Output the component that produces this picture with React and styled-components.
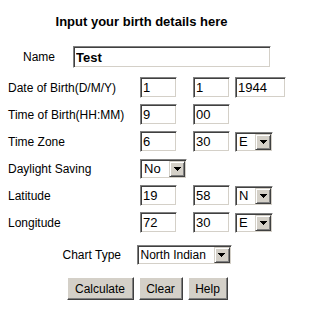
import React from "react";
import styled, { createGlobalStyle } from "styled-components";

const GlobalStyle = createGlobalStyle`
  html, body {
    margin: 0;
    padding: 0;
    background: #fff;
  }
  body {
    font-family: "Liberation Sans", Arial, sans-serif;
    color: #000;
  }
`;

const Page = styled.form`
  width: 294px;
  display: flex;
  flex-direction: column;
`;

const Title = styled.h1`
  margin: 0;
  height: 44px;
  line-height: 44px;
  padding-right: 11px;
  text-align: center;
  font-size: 13px;
  font-weight: bold;
`;

const CenterRow = styled.div`
  display: flex;
  justify-content: center;
  align-items: center;
  height: ${(p) => p.$height}px;
  margin-top: ${(p) => p.$top || 0}px;
  gap: ${(p) => p.$gap || 0}px;
`;

const Label = styled.label`
  font-size: 12px;
  width: ${(p) => (p.$width ? `${p.$width}px` : "auto")};
  flex-shrink: 0;
  white-space: nowrap;
`;

const GridLabel = styled(Label)`
  grid-column: 1;
`;

const Grid = styled.div`
  display: grid;
  grid-template-columns: 132px 53px 42px auto;
  grid-auto-rows: 27px;
  align-items: center;
  justify-items: start;
  padding-left: 8px;
  margin-top: 4px;
`;

const TextBox = styled.input`
  box-sizing: border-box;
  width: ${(p) => p.$width}px;
  height: ${(p) => p.$height || 21}px;
  margin: 0;
  padding: 0 2px;
  border: 1px solid;
  border-color: #808080 #fff #fff #808080;
  box-shadow: inset 1px 1px #404040, inset -1px -1px #d4d0c8;
  border-radius: 0;
  font-family: inherit;
  font-size: 13px;
  font-weight: ${(p) => (p.$bold ? "bold" : "normal")};
  color: #000;
  background: #fff;
  outline: none;
`;

const SelectFrame = styled.span`
  box-sizing: border-box;
  display: inline-flex;
  width: ${(p) => p.$width}px;
  height: 20px;
  padding: 1px;
  border: 1px solid;
  border-color: #808080 #fff #fff #808080;
  box-shadow: inset 1px 1px #404040, inset -1px -1px #d4d0c8;
  background: #fff;
`;

const NativeSelect = styled.select`
  appearance: none;
  flex: 1;
  min-width: 0;
  margin: 0;
  padding: 0 0 0 2px;
  border: 0;
  border-radius: 0;
  outline: none;
  background: transparent;
  font-family: inherit;
  font-size: ${(p) => p.$size || 13}px;
  color: #000;
`;

const ArrowButton = styled.span`
  box-sizing: border-box;
  width: 16px;
  flex-shrink: 0;
  display: flex;
  align-items: center;
  justify-content: center;
  background: #d4d0c8;
  border: 1px solid;
  border-color: #d4d0c8 #404040 #404040 #d4d0c8;
  box-shadow: inset 1px 1px #fff, inset -1px -1px #808080;
`;

const Button = styled.button`
  box-sizing: border-box;
  width: ${(p) => p.$width}px;
  height: 23px;
  margin: 0;
  padding: 0;
  background: #d4d0c8;
  border: 1px solid;
  border-color: #fff #404040 #404040 #fff;
  box-shadow: inset -1px -1px #808080, inset 1px 1px #d4d0c8;
  border-radius: 0;
  font-family: inherit;
  font-size: 12px;
  color: #000;
`;

const DownArrow = () => (
  <svg width="7" height="4" viewBox="0 0 7 4" shapeRendering="crispEdges">
    <path d="M0 0h7v1H0z M1 1h5v1H1z M2 2h3v1H2z M3 3h1v1H3z" fill="#000" />
  </svg>
);

const Select = ({ width, value, options, size }) => (
  <SelectFrame $width={width}>
    <NativeSelect defaultValue={value} $size={size}>
      {options.map((o) => (
        <option key={o}>{o}</option>
      ))}
    </NativeSelect>
    <ArrowButton>
      <DownArrow />
    </ArrowButton>
  </SelectFrame>
);

export default function App() {
  return (
    <>
      <GlobalStyle />
      <Page onSubmit={(e) => e.preventDefault()}>
        <Title>Input your birth details here</Title>

        <CenterRow $height={26}>
          <Label $width={50}>Name</Label>
          <TextBox $width={198} $height={22} $bold defaultValue="Test" />
        </CenterRow>

        <Grid>
          <GridLabel>Date of Birth(D/M/Y)</GridLabel>
          <TextBox $width={37} defaultValue="1" />
          <TextBox $width={37} defaultValue="1" />
          <TextBox $width={51} defaultValue="1944" />

          <GridLabel>Time of Birth(HH:MM)</GridLabel>
          <TextBox $width={37} defaultValue="9" />
          <TextBox $width={37} defaultValue="00" />

          <GridLabel>Time Zone</GridLabel>
          <TextBox $width={37} defaultValue="6" />
          <TextBox $width={37} defaultValue="30" />
          <Select width={38} value="E" options={["E", "W"]} />

          <GridLabel>Daylight Saving</GridLabel>
          <Select width={47} value="No" options={["No", "Yes"]} />

          <GridLabel>Latitude</GridLabel>
          <TextBox $width={37} defaultValue="19" />
          <TextBox $width={37} defaultValue="58" />
          <Select width={38} value="N" options={["N", "S"]} />

          <GridLabel>Longitude</GridLabel>
          <TextBox $width={37} defaultValue="72" />
          <TextBox $width={37} defaultValue="30" />
          <Select width={38} value="E" options={["E", "W"]} />
        </Grid>

        <CenterRow $height={27} $top={5}>
          <Label $width={74}>Chart Type</Label>
          <Select
            width={95}
            size={12}
            value="North Indian"
            options={["North Indian", "South Indian", "East Indian"]}
          />
        </CenterRow>

        <CenterRow $height={23} $top={9} $gap={5}>
          <Button type="submit" $width={67}>Calculate</Button>
          <Button type="reset" $width={44}>Clear</Button>
          <Button type="button" $width={40}>Help</Button>
        </CenterRow>
      </Page>
    </>
  );
}
